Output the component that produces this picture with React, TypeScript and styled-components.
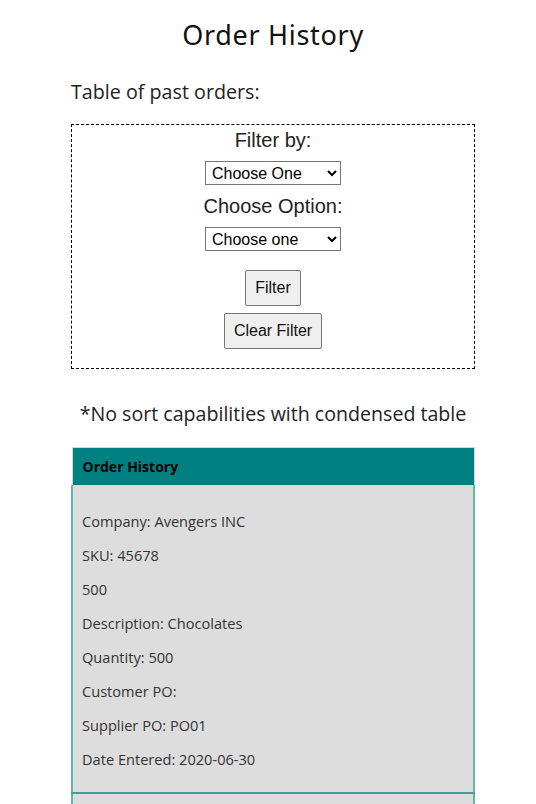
import React from "react";
import styled, { createGlobalStyle } from "styled-components";

const Global = createGlobalStyle`
  html, body { margin: 0; padding: 0; background: #fff; }
  body { font-family: "Open Sans", sans-serif; color: #222; }
`;

const Page = styled.div`
  padding: 0 0 0 10px;
`;

const Column = styled.div`
  width: 404px;
  margin: 0 auto;
`;

const Title = styled.h1`
  font-family: "Noto Sans", "DejaVu Sans", sans-serif;
  font-weight: 400;
  font-size: 27px;
  letter-spacing: 0.7px;
  text-align: center;
  margin: 0;
  padding-top: 16px;
  height: 40px;
  line-height: 38px;
  color: #111;
`;

const Lead = styled.p`
  font-size: 19.7px;
  margin: 0;
  padding-top: 20px;
  line-height: 32px;
  color: #222;
`;

const FilterBox = styled.div`
  margin-top: 16px;
  border: 1px dashed #000;
  height: 245px;
  box-sizing: border-box;
  display: flex;
  flex-direction: column;
  align-items: center;
  font-family: "Liberation Sans", Arial, sans-serif;
  padding-top: 2px;
`;

const Label = styled.div`
  font-size: 20px;
  line-height: 26px;
  color: #222;
  margin-bottom: 8px;
`;

const Select = styled.select<{ $mb: number }>`
  width: 136px;
  height: 24px;
  font-family: "Liberation Sans", Arial, sans-serif;
  font-size: 16px;
  color: #000;
  background: #fff;
  border: 1px solid #767676;
  border-radius: 0;
  padding: 0 2px;
  margin-bottom: ${(p) => p.$mb}px;
`;

const Button = styled.button`
  font-family: "Liberation Sans", Arial, sans-serif;
  font-size: 16px;
  color: #111;
  background: #efefef;
  border: 1px solid #767676;
  border-radius: 2px;
  height: 36px;
  padding: 0 9px;
  margin-bottom: 7px;
  &:first-of-type {
    margin-top: 1px;
  }
`;

const Note = styled.p`
  font-size: 19.6px;
  text-align: center;
  margin: 0;
  padding-top: 30px;
  line-height: 30px;
  color: #222;
`;

const Table = styled.table`
  margin-top: 18px;
  width: 404px;
  border-collapse: collapse;
  font-family: "Open Sans", sans-serif;
`;

const HeadCell = styled.th`
  background: #008080;
  color: #000;
  font-size: 14px;
  font-weight: 700;
  text-align: left;
  height: 38px;
  padding: 0 10px;
  border: 1px solid #d5d5d5;
  box-sizing: border-box;
`;

const BodyCell = styled.td`
  background: #dddddd;
  border-left: 2px solid #5fb5b0;
  border-right: 2px solid #5fb5b0;
  border-bottom: 2px solid #3fa09a;
  padding: 11px 10px 9px 9px;
  color: #333;
  font-size: 14.6px;
`;

const Line = styled.p`
  margin: 14px 0;
  line-height: 20px;
`;

const orders = [
  [
    "Company: Avengers INC",
    "SKU: 45678",
    "500",
    "Description: Chocolates",
    "Quantity: 500",
    "Customer PO:",
    "Supplier PO: PO01",
    "Date Entered: 2020-06-30",
  ],
  [
    "Company: Avengers INC",
    "SKU: 45679",
    "200",
    "Description: Candy",
    "Quantity: 200",
    "Customer PO:",
    "Supplier PO: PO02",
    "Date Entered: 2020-07-01",
  ],
];

export default function App() {
  return (
    <Page>
      <Global />
      <Column>
        <Title>Order History</Title>
        <Lead>Table of past orders:</Lead>
        <FilterBox>
          <Label>Filter by:</Label>
          <Select $mb={8}>
            <option>Choose One</option>
          </Select>
          <Label>Choose Option:</Label>
          <Select $mb={18}>
            <option>Choose one</option>
          </Select>
          <Button>Filter</Button>
          <Button>Clear Filter</Button>
        </FilterBox>
        <Note>*No sort capabilities with condensed table</Note>
        <Table>
          <thead>
            <tr>
              <HeadCell>Order History</HeadCell>
            </tr>
          </thead>
          <tbody>
            {orders.map((o, i) => (
              <tr key={i}>
                <BodyCell>
                  {o.map((t, j) => (
                    <Line key={j}>{t}</Line>
                  ))}
                </BodyCell>
              </tr>
            ))}
          </tbody>
        </Table>
      </Column>
    </Page>
  );
}
